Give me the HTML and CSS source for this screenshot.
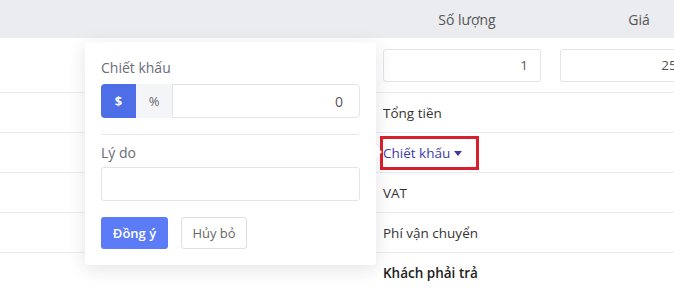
FILE: index.html
```html
<!DOCTYPE html>
<html lang="vi">
<head>
<meta charset="utf-8">
<link rel="stylesheet" href="styles.css">
</head>
<body>
<div class="sheet">
  <div class="head">
    <div class="hcell"></div>
    <div class="hcell qty">Số lượng</div>
    <div></div>
    <div class="hcell price">Giá</div>
  </div>
  <div class="row first">
    <div></div>
    <div class="cell"><div class="box">1</div></div>
    <div></div>
    <div class="cell"><div class="box wide">250,000</div></div>
  </div>
  <div class="row"><div></div><div class="label">Tổng tiền</div></div>
  <div class="row"><div></div><div class="label"><span class="mark"><span class="link">Chiết khấu <span class="caret"></span></span></span></div></div>
  <div class="row"><div></div><div class="label">VAT</div></div>
  <div class="row"><div></div><div class="label">Phí vận chuyển</div></div>
  <div class="row last"><div></div><div class="label strong">Khách phải trả</div></div>

  <div class="pop">
    <div class="plabel">Chiết khấu</div>
    <div class="group">
      <span class="seg on">$</span>
      <span class="seg">%</span>
      <span class="val">0</span>
    </div>
    <div class="sep"></div>
    <div class="plabel">Lý do</div>
    <div class="area"></div>
    <div class="actions">
      <span class="btn primary">Đồng ý</span>
      <span class="btn ghost">Hủy bỏ</span>
    </div>
    <span class="arrow"></span>
  </div>
</div>
</body>
</html>
```
FILE: styles.css
```css
* { box-sizing: border-box; }
html, body { margin: 0; padding: 0; background: #fff; overflow: hidden; }
body { font-family: "Open Sans", "Noto Sans", sans-serif; font-size: 13.5px; color: #333; width: 674px; height: 304px; }
.sheet { position: relative; width: 760px; }
.head { display: grid; grid-template-columns: 383px 158px 19px 158px; height: 38px; background: #ebecf0; align-items: center; color: #555; font-size: 14px; }
.hcell { text-align: center; }
.hcell.qty { padding-left: 10px; }
.row { display: grid; grid-template-columns: 383px 158px 19px 158px; height: 40px; border-bottom: 1px solid #ebebef; align-items: center; }
.row.first { height: 55px; }
.row.last { border-bottom: none; }
.cell { display: flex; }
.box { width: 158px; height: 33px; border: 1px solid #e3e3e8; border-radius: 3px; display: flex; align-items: center; justify-content: flex-end; padding-right: 12px; color: #555; }
.box.wide { padding-right: 6px; }
.label { grid-column: 2 / 5; color: #333; }
.label.strong { font-weight: 600; color: #222; }
.mark { display: inline-flex; align-items: center; height: 34px; margin-left: -3px; border: 3px solid #d8202c; width: 99px; }
.link { color: #3c3aa6; display: inline-flex; align-items: center; }
.caret { display: inline-block; width: 0; height: 0; border-left: 4px solid transparent; border-right: 4px solid transparent; border-top: 5px solid #3c3aa6; margin-left: 4px; margin-top: 1px; }

.pop { position: absolute; left: 85px; top: 42px; width: 291px; height: 223px; background: #fff; border-radius: 4px; box-shadow: 0 4px 18px rgba(40, 40, 60, 0.13); padding: 16px; display: flex; flex-direction: column; }
.plabel { height: 20px; line-height: 20px; color: #6c6c78; font-size: 14px; }
.group { margin-top: 6px; height: 34px; display: flex; border: 1px solid #e3e3e8; border-radius: 4px; width: 259px; }
.seg { width: 36px; display: flex; align-items: center; justify-content: center; background: #f4f5f8; color: #666; border-right: 1px solid #e3e3e8; margin: -1px 0; font-size: 13px; }
.seg.on { width: 35px; margin-left: -1px; background: #4d6ee6; color: #fff; font-weight: 700; border-right: none; border-radius: 4px 0 0 4px; }
.seg + .seg { width: 37px; }
.val { flex: 1; display: flex; align-items: center; justify-content: flex-end; padding-right: 16px; color: #555; font-size: 14px; }
.sep { margin-top: 16px; height: 1px; background: #e8e8ec; width: 258px; }
.sep + .plabel { margin-top: 8px; }
.area { margin-top: 4px; height: 34px; border: 1px solid #e3e3e8; border-radius: 3px; width: 259px; }
.actions { margin-top: 16px; display: flex; gap: 13px; }
.btn { height: 32px; display: inline-flex; align-items: center; justify-content: center; border-radius: 3px; font-size: 13px; }
.btn.primary { width: 67px; background: #5b7cf6; color: #fff; font-weight: 600; }
.btn.ghost { width: 66px; border: 1px solid #dedee3; color: #666; }
.arrow { position: absolute; right: -6px; top: 104px; width: 0; height: 0; border-top: 6px solid transparent; border-bottom: 6px solid transparent; border-left: 6px solid #fff; }
```
